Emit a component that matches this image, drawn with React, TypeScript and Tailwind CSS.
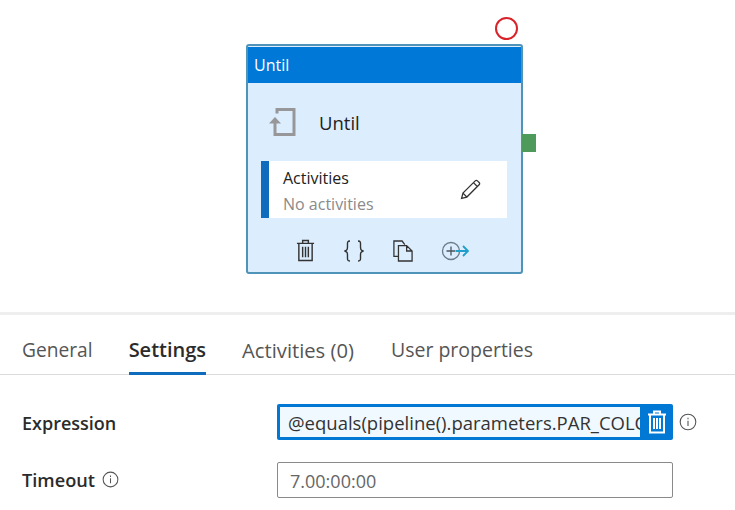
import React from 'react';

const FONT = 'font-["Open_Sans","Noto_Sans",sans-serif]';

const TrashIcon = ({ className = '', width = 1.5 }: { className?: string; width?: number }) => (
  <svg viewBox="0 0 20 24" className={className} fill="none" stroke="currentColor" strokeWidth={width}>
    <path d="M1 4.500h18M7 4.500V1.500h6v3M3 4.500V22.500h14V4.500M7 8v11M10 8v11M13 8v11" />
  </svg>
);

const InfoIcon = ({ className = '' }: { className?: string }) => (
  <svg viewBox="0 0 18 18" className={className} fill="none" stroke="currentColor" strokeWidth="1.1">
    <circle cx="9" cy="9" r="7.800" />
    <path d="M9 7.800v5.200M9 4.800v1.500" />
  </svg>
);

const UntilCard = () => (
  <div className="relative w-[277px] h-[230px] rounded-[3px] border-2 border-[#4f94b8] bg-[#dcedfd]">
    <div className="absolute -top-[29px] right-[3px] w-[23px] h-[23px] rounded-full border-2 border-[#d8232a] bg-white" />
    <div className="absolute top-[88px] -right-[15px] w-[14px] h-[18px] bg-[#4e9a5a]" />

    <div className="mt-px h-[36px] bg-[#0078d7] flex items-center pl-[6px] text-white text-[16px] leading-none">Until</div>

    <div className="h-[78px] flex items-center pl-[20px]">
      <svg viewBox="0 0 28 30" className="w-[28px] h-[30px] text-[#979799]" fill="none" stroke="currentColor" strokeWidth="3">
        <path d="M9 6.500V2.500h17v25H7V14" />
        <path d="M1 16.500L7 10l6 6.500z" fill="currentColor" stroke="none" />
      </svg>
      <span className="ml-[23px] pt-[2px] text-[18.500px] leading-none text-[#222]">Until</span>
    </div>

    <div className="ml-[13px] mr-[14px] h-[57px] flex bg-white">
      <div className="w-[8px] bg-[#0f6cbd]" />
      <div className="flex-1 flex items-center justify-between pl-[14px] pr-[26px]">
        <div className="flex flex-col gap-[4px] pt-[2px]">
          <span className="text-[16px] leading-[22px] text-[#222]">Activities</span>
          <span className="text-[16px] leading-[22px] text-[#8a8a8a]">No activities</span>
        </div>
        <svg viewBox="0 0 20 20" className="w-[21px] h-[21px] text-[#333]" fill="none" stroke="currentColor" strokeWidth="1.200">
          <path d="M1.500 18.500l1.300-5L14.500 1.800a1.500 1.500 0 0 1 2.100 0l1.600 1.600a1.500 1.500 0 0 1 0 2.100L6.500 17.200zM2.800 13.500l3.700 3.700M12.800 3.500l3.700 3.700" />
        </svg>
      </div>
    </div>

    <div className="flex items-center mt-[21px] pl-[48px] text-[#333]">
      <TrashIcon className="w-[19px] h-[23px]" />
      <svg viewBox="0 0 20 22" className="ml-[29px] w-[20px] h-[22px]" fill="none" stroke="currentColor" strokeWidth="1.400">
        <path d="M6 1C3 1 3.500 3 3.500 6S3.500 10 1 11c2.500 1 2.500 2 2.500 5s-.5 5 2.500 5M14 1c3 0 2.500 2 2.500 5s0 4 2.500 5c-2.500 1-2.500 2-2.500 5s.5 5-2.500 5" />
      </svg>
      <svg viewBox="0 0 22 24" className="ml-[29px] w-[20px] h-[22px]" fill="none" stroke="currentColor" strokeWidth="1.400">
        <path d="M6 18H1V1h9l3 4M6 6h9l6 6v11H6zM15 6v6h6" />
      </svg>
      <svg viewBox="0 0 30 20" className="ml-[27px] w-[30px] h-[20px]" fill="none" strokeWidth="1.300">
        <circle cx="11" cy="10" r="8.500" stroke="#6b7c8a" />
        <path d="M6.500 10h9M11 5.500v9" stroke="#4a5560" />
        <path d="M16 10h12M23 5l5 5-5 5" stroke="#1f9fc9" strokeWidth="1.800" />
      </svg>
    </div>
  </div>
);

const tabs = [
  { label: 'General', cls: 'text-[19.200px] text-[#555]' },
  { label: 'Settings', cls: 'text-[20px] font-semibold text-[#2b2b2b] border-b-[3px] border-[#0f6cbd]' },
  { label: 'Activities (0)', cls: 'text-[20.200px] text-[#555] pr-px' },
  { label: 'User properties', cls: 'text-[19.500px] text-[#555]' },
];

export default function App() {
  return (
    <div className={`w-[735px] h-[510px] overflow-hidden bg-white ${FONT}`}>
      <div className="h-[312px] pt-[44px] pl-[246px]">
        <UntilCard />
      </div>
      <div className="h-[3px] bg-[#eeeeee]" />

      <div className="h-[60px] flex gap-[36px] pl-[22px] border-b border-[#dcdcdc]">
        {tabs.map((tab) => (
          <div key={tab.label} className={`h-[60px] pt-[21px] leading-[28px] ${tab.cls}`}>
            {tab.label}
          </div>
        ))}
      </div>

      <div className="pl-[22px] pt-[29px] flex flex-col gap-[22px]">
        <div className="flex items-center h-[36px]">
          <div className="w-[255px] pt-[2px] text-[18px] font-semibold text-[#2b2b2b]">Expression</div>
          <div className="w-[396px] h-[36px] flex rounded-[2px] bg-[#0078d4] p-[3px] pr-0">
            <div className="flex-1 min-w-0 overflow-hidden whitespace-nowrap bg-[#f0f9ff] pl-[8px] text-[18.500px] leading-[31px] text-[#333]">
              @equals(pipeline().parameters.PAR_COLOR)
            </div>
            <div className="w-[33px] flex items-center justify-center text-white">
              <TrashIcon className="w-[20px] h-[24px]" width={2} />
            </div>
          </div>
          <InfoIcon className="ml-[6px] w-[18px] h-[18px] text-[#555]" />
        </div>

        <div className="flex items-center h-[36px]">
          <div className="w-[255px] flex items-center gap-[7px]">
            <span className="pt-px text-[18.200px] font-semibold text-[#2b2b2b]">Timeout</span>
            <InfoIcon className="w-[17px] h-[17px] text-[#555]" />
          </div>
          <div className="w-[396px] h-[36px] rounded-[2px] border border-[#8a8a8a] pl-[12px] text-[18px] leading-[36px] text-[#666]">
            7.00:00:00
          </div>
        </div>
      </div>
    </div>
  );
}
